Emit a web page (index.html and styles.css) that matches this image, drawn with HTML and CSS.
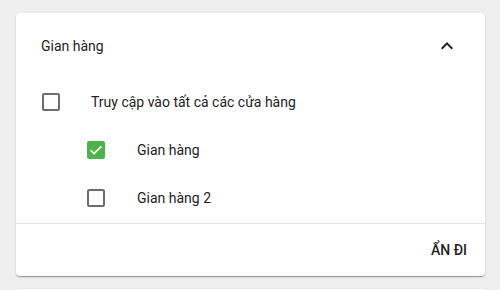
FILE: index.html
```html
<!DOCTYPE html>
<html lang="vi">
<head>
<meta charset="utf-8">
<link rel="stylesheet" href="styles.css">
</head>
<body>
<div class="panel">
  <div class="panel-header">
    <span class="panel-title">Gian hàng</span>
    <svg class="chevron" viewBox="0 0 24 24" width="24" height="24"><path d="M12 8l-6 6 1.41 1.41L12 10.83l4.59 4.58L18 14z" fill="#212121"/></svg>
  </div>
  <div class="panel-body">
    <label class="row">
      <span class="box"></span>
      <span class="label">Truy cập vào tất cả các cửa hàng</span>
    </label>
    <label class="row sub">
      <span class="box checked"><svg viewBox="0 0 18 18" width="18" height="18"><path d="M3.6 9.2l3.5 3.4 7.3-7.3" fill="none" stroke="#fff" stroke-width="1.8"/></svg></span>
      <span class="label">Gian hàng</span>
    </label>
    <label class="row sub">
      <span class="box"></span>
      <span class="label">Gian hàng 2</span>
    </label>
  </div>
  <div class="panel-footer">
    <button class="btn">Ẩn đi</button>
  </div>
</div>
<div class="panel next"></div>
</body>
</html>
```
FILE: styles.css
```css
html, body {
  margin: 0;
  padding: 0;
  background: #efefef;
  overflow: hidden;
}
body {
  padding: 13px 15px 0 16px;
  font-family: Roboto, "Liberation Sans", sans-serif;
  font-size: 14px;
  color: #222;
  height: 290px;
  box-sizing: border-box;
}
.panel {
  background: #fff;
  border-radius: 4px;
  box-shadow: 0 2px 1px -1px rgba(0,0,0,.2), 0 1px 1px 0 rgba(0,0,0,.14), 0 1px 3px 0 rgba(0,0,0,.12);
}
.panel.next {
  margin-top: 13px;
  height: 2px;
  border-radius: 4px 4px 0 0;
}
.panel-header {
  height: 65px;
  display: flex;
  align-items: center;
  justify-content: space-between;
  padding: 0 26px 0 25px;
  box-sizing: border-box;
}
.panel-title {
  font-size: 14px;
  line-height: 20px;
}
.chevron {
  display: block;
}
.panel-body {
  padding-left: 26px;
}
.row {
  height: 48px;
  display: flex;
  align-items: center;
  cursor: pointer;
}
.row.sub {
  padding-left: 45px;
}
.box {
  width: 18px;
  height: 18px;
  box-sizing: border-box;
  border: 2px solid #6d6d6d;
  border-radius: 2px;
  flex: none;
  position: relative;
}
.box.checked {
  background: #4cb44a;
  border-color: #4cb44a;
}
.box.checked svg {
  position: absolute;
  left: -2px;
  top: -2px;
}
.label {
  margin-left: 32px;
  font-size: 14px;
}
.row:first-child .label {
  margin-left: 31px;
}
.panel-footer {
  border-top: 1px solid #e3e3e3;
  margin-top: 1px;
  height: 52px;
  display: flex;
  align-items: center;
  justify-content: flex-end;
  padding-right: 10px;
}
.btn {
  background: none;
  border: 0;
  font-family: Roboto, "Liberation Sans", sans-serif;
  font-size: 14px;
  font-weight: 500;
  text-transform: uppercase;
  color: #222;
  padding: 8px;
  line-height: 20px;
}
```
